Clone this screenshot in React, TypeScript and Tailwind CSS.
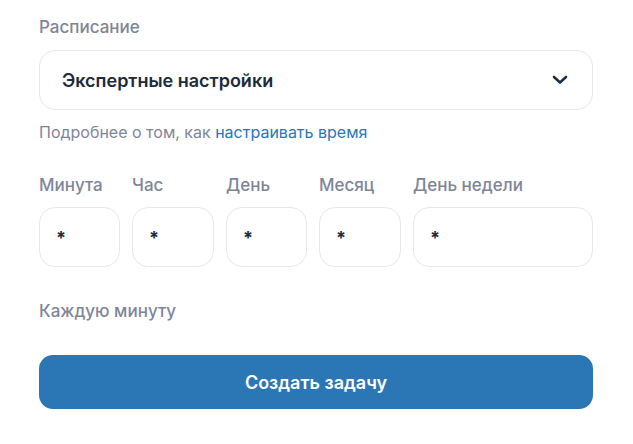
import React, { useState } from "react";

const fields = [
  { label: "Минута", width: "w-[81px]" },
  { label: "Час", width: "w-[82px]" },
  { label: "День", width: "w-[81px]" },
  { label: "Месяц", width: "w-[82px]" },
  { label: "День недели", width: "flex-1" },
];

export default function App() {
  const [values, setValues] = useState(["*", "*", "*", "*", "*"]);

  return (
    <div
      className="min-h-screen bg-white pl-[39px] pr-[40px] pt-[16px] text-[#1c2b3b]"
      style={{ fontFamily: "Inter, 'Noto Sans', sans-serif" }}
    >
      <div className="text-[17px] font-medium leading-[22px] text-[#7f8599]">Расписание</div>

      <button
        type="button"
        className="mt-[12px] flex h-[60px] w-full items-center justify-between rounded-[16px] border border-[#e6e8ee] bg-white pl-[22px] pr-[24px]"
      >
        <span className="text-[18px] font-semibold text-[#1c2b3b]">Экспертные настройки</span>
        <svg width="16" height="10" viewBox="0 0 16 10" fill="none">
          <path d="M2 2l6 5.5L14 2" stroke="#1c2f45" strokeWidth="2.6" strokeLinecap="round" strokeLinejoin="round" />
        </svg>
      </button>

      <p className="mt-[12px] text-[16px] leading-[20px] text-[#7f8599]">
        Подробнее о том, как <a className="text-[#2a76b6]">настраивать время</a>
      </p>

      <div className="mt-[32px] flex gap-[12px]">
        {fields.map((f, i) => (
          <label key={f.label} className={`flex flex-col ${f.width}`}>
            <span className="text-[17px] font-medium leading-[22px] text-[#7f8599]">{f.label}</span>
            <input
              value={values[i]}
              onChange={(e) => {
                const next = [...values];
                next[i] = e.target.value;
                setValues(next);
              }}
              className="mt-[11px] h-[60px] w-full rounded-[16px] border border-[#e6e8ee] bg-white px-[16px] text-[18px] font-bold text-[#1c2b3b] outline-none"
            />
          </label>
        ))}
      </div>

      <div className="mt-[33px] text-[17px] font-medium leading-[22px] text-[#7f8599]">Каждую минуту</div>

      <button
        type="button"
        className="mt-[33px] flex h-[54px] w-full items-center justify-center rounded-[14px] bg-[#2b77b5] text-[18px] font-semibold text-white"
      >
        Создать задачу
      </button>
    </div>
  );
}
